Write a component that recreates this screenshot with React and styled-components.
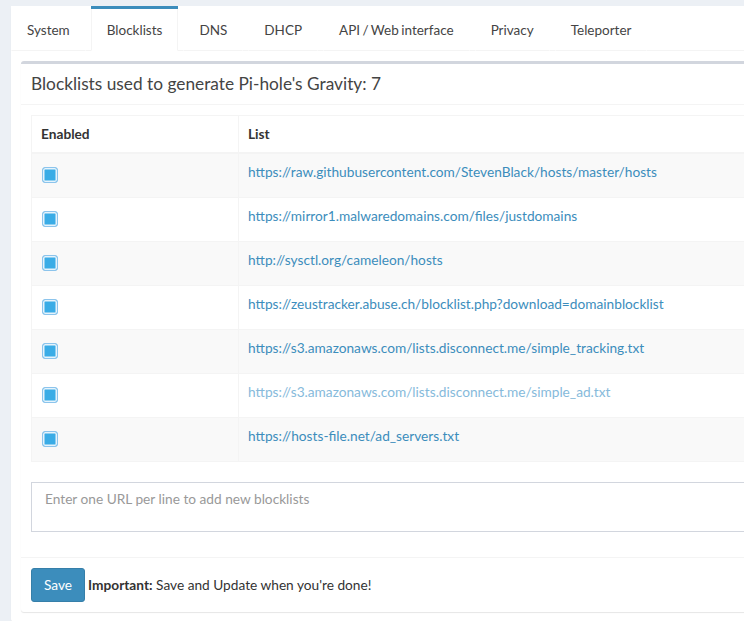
import React from "react";
import styled, { createGlobalStyle } from "styled-components";

const Global = createGlobalStyle`
  html, body { margin: 0; padding: 0; background: #ecf0f5; overflow: hidden; }
  body { font-family: Lato, "Noto Sans", sans-serif; font-size: 13.7px; color: #333; }
  * { box-sizing: border-box; }
`;

const Page = styled.div`
  padding: 6px 0 0 11px;
  width: 1000px;
`;

const TabsBox = styled.div`
  background: #fff;
  border-radius: 3px;
  box-shadow: 0 1px 1px rgba(0, 0, 0, 0.1);
`;

const TabBar = styled.ul`
  display: flex;
  list-style: none;
  margin: 0;
  padding: 0;
  border-bottom: 1px solid #f4f4f4;
`;

const Tab = styled.li`
  margin-right: 5px;
  margin-bottom: -1px;
  border-top: 3px solid ${(p) => (p.$active ? "#3c8dbc" : "transparent")};
  background: #fff;
`;

const TabLink = styled.a`
  display: block;
  padding: 11px 15px 10px;
  line-height: 20px;
  font-size: 13.5px;
  word-spacing: -1px;
  color: #444;
  text-decoration: none;
  border-left: 1px solid ${(p) => (p.$active ? "#f4f4f4" : "transparent")};
  border-right: 1px solid ${(p) => (p.$active ? "#f4f4f4" : "transparent")};
  border-bottom: 1px solid ${(p) => (p.$active ? "#fff" : "#f4f4f4")};
`;

const TabContent = styled.div`
  padding: 10px;
`;

const Box = styled.div`
  background: #fff;
  border-top: 3px solid #d2d6de;
  border-radius: 3px;
  box-shadow: 0 1px 1px rgba(0, 0, 0, 0.1);
`;

const BoxHeader = styled.div`
  padding: 10px;
  border-bottom: 1px solid #f4f4f4;
`;

const BoxTitle = styled.h3`
  margin: 0;
  font-size: 17.3px;
  font-weight: 400;
  line-height: 20px;
  color: #444;
`;

const BoxBody = styled.div`
  padding: 10px;
`;

const Table = styled.table`
  width: 100%;
  border-collapse: collapse;
  border: 1px solid #f4f4f4;
  margin-bottom: 20px;
`;

const Th = styled.th`
  text-align: left;
  padding: 8px 9px;
  line-height: 20px;
  font-weight: 700;
  color: #333;
  border: 1px solid #f4f4f4;
  border-bottom-width: 2px;
  width: ${(p) => p.$w || "auto"};
`;

const Row = styled.tr`
  background: ${(p) => (p.$odd ? "#f9f9f9" : "#fff")};
`;

const Td = styled.td`
  padding: 8px 9px;
  line-height: 20px;
  vertical-align: top;
  border: 1px solid #f4f4f4;
`;

const Check = styled.span`
  display: block;
  width: 16px;
  height: 16px;
  margin: 5px 0 6px 1px;
  border: 1px solid #8cc4ec;
  border-radius: 3px;
  background: #3aace6;
  box-shadow: inset 0 0 0 1.5px #e6f3fc;
`;

const Link = styled.a`
  color: ${(p) => (p.$faded ? "#86badb" : "#3c8dbc")};
  text-decoration: none;
`;

const TextArea = styled.textarea`
  display: block;
  width: 100%;
  height: 50px;
  margin: 0 0 15px;
  padding: 6px 13px;
  border: 1px solid #d2d6de;
  border-radius: 0;
  font-family: inherit;
  font-size: 13.7px;
  line-height: 20px;
  color: #555;
  resize: none;
  &::placeholder { color: #999; }
`;

const BoxFooter = styled.div`
  padding: 10px;
  border-top: 1px solid #f4f4f4;
  display: flex;
  align-items: center;
  gap: 3px;
`;

const Button = styled.button`
  padding: 6px 12px;
  line-height: 20px;
  font-family: inherit;
  font-size: 13.7px;
  color: #fff;
  background: #3c8dbc;
  border: 1px solid #367fa9;
  border-radius: 3px;
`;

const Note = styled.span`
  color: #333;
  line-height: 20px;
`;

const tabs = ["System", "Blocklists", "DNS", "DHCP", "API / Web interface", "Privacy", "Teleporter"];

const lists = [
  "https://raw.githubusercontent.com/StevenBlack/hosts/master/hosts",
  "https://mirror1.malwaredomains.com/files/justdomains",
  "http://sysctl.org/cameleon/hosts",
  "https://zeustracker.abuse.ch/blocklist.php?download=domainblocklist",
  "https://s3.amazonaws.com/lists.disconnect.me/simple_tracking.txt",
  "https://s3.amazonaws.com/lists.disconnect.me/simple_ad.txt",
  "https://hosts-file.net/ad_servers.txt",
];

export default function App() {
  return (
    <>
      <Global />
      <Page>
        <TabsBox>
          <TabBar>
            {tabs.map((t) => (
              <Tab key={t} $active={t === "Blocklists"}>
                <TabLink href="#" $active={t === "Blocklists"}>{t}</TabLink>
              </Tab>
            ))}
          </TabBar>
          <TabContent>
            <Box>
              <BoxHeader>
                <BoxTitle>Blocklists used to generate Pi-hole's Gravity: 7</BoxTitle>
              </BoxHeader>
              <BoxBody>
                <Table>
                  <thead>
                    <tr>
                      <Th $w="207px">Enabled</Th>
                      <Th>List</Th>
                    </tr>
                  </thead>
                  <tbody>
                    {lists.map((l, i) => (
                      <Row key={l} $odd={i % 2 === 0}>
                        <Td><Check /></Td>
                        <Td><Link href="#" $faded={i === 5}>{l}</Link></Td>
                      </Row>
                    ))}
                  </tbody>
                </Table>
                <TextArea placeholder="Enter one URL per line to add new blocklists" />
              </BoxBody>
              <BoxFooter>
                <Button>Save</Button>
                <Note><strong>Important:</strong> Save and Update when you're done!</Note>
              </BoxFooter>
            </Box>
          </TabContent>
        </TabsBox>
      </Page>
    </>
  );
}
